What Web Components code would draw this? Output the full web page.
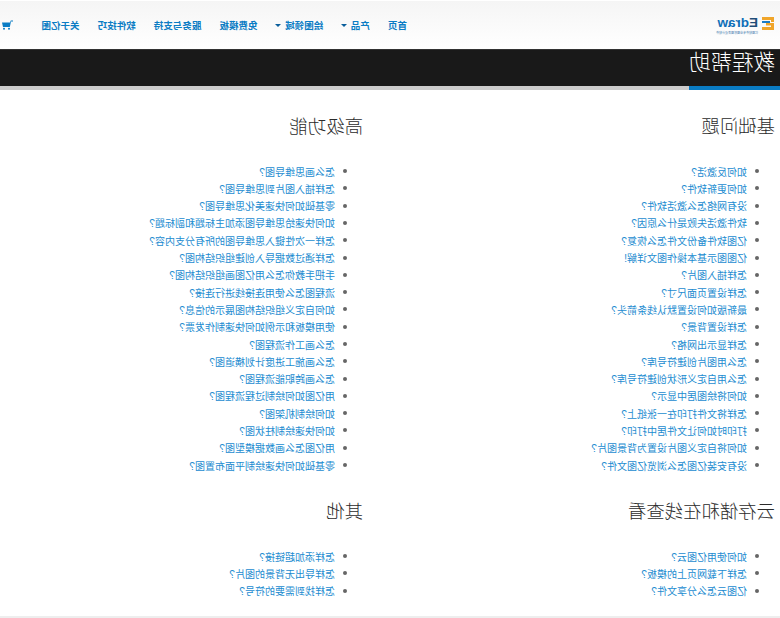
<!DOCTYPE html>
<html lang="zh">
<head>
<meta charset="utf-8">
<title>教程帮助</title>
<style>
  html, body { margin: 0; padding: 0; background: #fff; overflow: hidden; }
</style>
</head>
<body>
<help-page>
  <site-header>
    <nav-link>首页</nav-link>
    <nav-link caret>产品</nav-link>
    <nav-link caret>绘图领域</nav-link>
    <nav-link>免费模板</nav-link>
    <nav-link>服务与支持</nav-link>
    <nav-link>软件技巧</nav-link>
    <nav-link>关于亿图</nav-link>
  </site-header>
  <title-band>教程帮助</title-band>
  <help-grid>
    <help-section heading="基础问题">
      <help-item>如何反激活?</help-item>
      <help-item>如何更新软件?</help-item>
      <help-item>没有网络怎么激活软件?</help-item>
      <help-item>软件激活失败是什么原因?</help-item>
      <help-item>亿图软件备份文件怎么恢复?</help-item>
      <help-item>亿图图示基本操作图文详解!</help-item>
      <help-item>怎样插入图片?</help-item>
      <help-item>怎样设置页面尺寸?</help-item>
      <help-item>最新版如何设置默认线条箭头?</help-item>
      <help-item>怎样设置背景?</help-item>
      <help-item>怎样显示出网格?</help-item>
      <help-item>怎么用图片创建符号库?</help-item>
      <help-item>怎么用自定义形状创建符号库?</help-item>
      <help-item>如何将绘图居中显示?</help-item>
      <help-item>怎样将文件打印在一张纸上?</help-item>
      <help-item>打印时如何让文件居中打印?</help-item>
      <help-item>如何将自定义图片设置为背景图片?</help-item>
      <help-item>没有安装亿图怎么浏览亿图文件?</help-item>
    </help-section>
    <help-section heading="高级功能">
      <help-item>怎么画思维导图?</help-item>
      <help-item>怎样插入图片到思维导图?</help-item>
      <help-item>零基础如何快速美化思维导图?</help-item>
      <help-item>如何快速给思维导图添加主标题和副标题?</help-item>
      <help-item>怎样一次性键入思维导图的所有分支内容?</help-item>
      <help-item>怎样通过数据导入创建组织结构图?</help-item>
      <help-item>手把手教你怎么用亿图画组织结构图?</help-item>
      <help-item>流程图怎么使用连接线进行连接?</help-item>
      <help-item>如何自定义组织结构图展示的信息?</help-item>
      <help-item>使用模板和示例如何快速制作发票?</help-item>
      <help-item>怎么画工作流程图?</help-item>
      <help-item>怎么画施工进度计划横道图?</help-item>
      <help-item>怎么画跨职能流程图?</help-item>
      <help-item>用亿图如何绘制过程流程图?</help-item>
      <help-item>如何绘制机架图?</help-item>
      <help-item>如何快速绘制柱状图?</help-item>
      <help-item>用亿图怎么画数据模型图?</help-item>
      <help-item>零基础如何快速绘制平面布置图?</help-item>
    </help-section>
    <help-section heading="云存储和在线查看">
      <help-item>如何使用亿图云?</help-item>
      <help-item>怎样下载网页上的模板?</help-item>
      <help-item>亿图云怎么分享文件?</help-item>
    </help-section>
    <help-section heading="其他">
      <help-item>怎样添加超链接?</help-item>
      <help-item>怎样导出无背景的图片?</help-item>
      <help-item>怎样找到需要的符号?</help-item>
    </help-section>
  </help-grid>
</help-page>

<script>
const CJK = '"Liberation Sans", "Noto Sans CJK SC", sans-serif';

// the whole page is a mirror image of the normal site
class HelpPage extends HTMLElement {
    constructor() {
        super();
        this.attachShadow({ mode: 'open' });
        this.shadowRoot.innerHTML = `
            <style>
                :host {
                    display: flex;
                    flex-direction: column;
                    width: 780px;
                    height: 618px;
                    overflow: hidden;
                    background: #fff;
                    font-family: ${CJK};
                    transform: scaleX(-1);
                }
                .foot {
                    margin-top: auto;
                    height: 2px;
                    background: #eee;
                }
            </style>
            <slot></slot>
            <div class="foot"></div>
        `;
    }
}

class SiteHeader extends HTMLElement {
    constructor() {
        super();
        this.attachShadow({ mode: 'open' });
        this.shadowRoot.innerHTML = `
            <style>
                :host {
                    display: flex;
                    align-items: center;
                    height: 49px;
                    padding: 0 2px 0 6px;
                    border-top: 1px solid #fff;
                    box-sizing: border-box;
                    background: linear-gradient(#f5f5f5, #fff);
                }
                .logo {
                    display: flex;
                    gap: 4px;
                    width: 54px;
                    margin-right: 313px;
                }
                .logo svg { margin-top: 2px; }
                .name {
                    display: flex;
                    flex-direction: column;
                    width: 38px;
                }
                .word {
                    font: bold 13.500px/15px "Liberation Sans", sans-serif;
                    color: #0f6fb8;
                }
                .word b { color: #1f4e79; }
                .tag {
                    font-size: 3px;
                    line-height: 4px;
                    margin-top: 1px;
                    white-space: nowrap;
                    color: #4a7fb0;
                }
                nav {
                    display: flex;
                    gap: 18.200px;
                    flex: 1;
                }
                svg { display: block; flex: none; }
            </style>
            <div class="logo">
                <svg width="12" height="13" viewBox="0 0 12 13">
                    <path d="M0 0h12v3H3v2H0z" fill="#f0a52a"/>
                    <path d="M0 6h8v2.500H3V10h9v3H0z" fill="#f0a52a"/>
                    <path d="M4 4h8v2H4z" fill="#1c7cc8"/>
                </svg>
                <div class="name">
                    <span class="word"><b>E</b>draw</span>
                    <span class="tag">亿图软件专业图形图表设计软件</span>
                </div>
            </div>
            <nav><slot></slot></nav>
            <svg width="11" height="10" viewBox="0 0 11 10">
                <path d="M0 .5h2.200L3 2.500h8L10 7H3.200L2 1.500H0z" fill="#0a7cc4"/>
                <circle cx="4" cy="8.700" r="1" fill="#0a7cc4"/>
                <circle cx="9" cy="8.700" r="1" fill="#0a7cc4"/>
            </svg>
        `;
    }
}

class NavLink extends HTMLElement {
    constructor() {
        super();
        this.attachShadow({ mode: 'open' });
        this.shadowRoot.innerHTML = `
            <style>
                :host {
                    display: flex;
                    align-items: center;
                    gap: 4px;
                    font-size: 9.500px;
                    font-weight: bold;
                    color: #0a7cc4;
                    white-space: nowrap;
                }
                .caret {
                    display: none;
                    width: 0;
                    height: 0;
                    margin-right: -.600px;
                    border: 3px solid transparent;
                    border-top: 3px solid #0a5f9c;
                    border-bottom: 0;
                }
                :host([caret]) .caret { display: block; }
            </style>
            <slot></slot>
            <span class="caret"></span>
        `;
    }
}

class TitleBand extends HTMLElement {
    constructor() {
        super();
        this.attachShadow({ mode: 'open' });
        this.shadowRoot.innerHTML = `
            <style>
                :host {
                    display: block;
                    height: 37px;
                    background: #191919;
                    border-top: 1px solid #333;
                    box-sizing: border-box;
                    position: relative;
                    padding-left: 5px;
                    font-size: 21.500px;
                    line-height: 26px;
                    font-weight: 300;
                    color: #fff;
                    margin-bottom: 4px;
                }
                .rule {
                    position: absolute;
                    left: 0;
                    right: 0;
                    top: 36px;
                    height: 4px;
                    background: #ccc;
                }
                .rule i {
                    display: block;
                    width: 91px;
                    height: 4px;
                    background: #0a7cc4;
                }
            </style>
            <slot></slot>
            <div class="rule"><i></i></div>
        `;
    }
}

class HelpGrid extends HTMLElement {
    constructor() {
        super();
        this.attachShadow({ mode: 'open' });
        this.shadowRoot.innerHTML = `
            <style>
                :host {
                    display: grid;
                    grid-template-columns: 412px 1fr;
                    row-gap: 28.300px;
                    padding: 27px 0 0 5px;
                }
            </style>
            <slot></slot>
        `;
    }
}

class HelpSection extends HTMLElement {
    constructor() {
        super();
        this.attachShadow({ mode: 'open' });
        this.shadowRoot.innerHTML = `
            <style>
                :host { display: block; }
                h3 {
                    margin: 0 0 25.400px;
                    font-size: 18.400px;
                    line-height: 20px;
                    font-weight: 300;
                    color: #2b2b2b;
                }
                .list { padding-left: 16px; }
            </style>
            <h3></h3>
            <div class="list"><slot></slot></div>
        `;
    }

    connectedCallback() {
        this.shadowRoot.querySelector('h3').textContent = this.getAttribute('heading');
    }
}

class HelpItem extends HTMLElement {
    constructor() {
        super();
        this.attachShadow({ mode: 'open' });
        this.shadowRoot.innerHTML = `
            <style>
                :host {
                    display: flex;
                    align-items: center;
                    gap: 8px;
                    height: 17.300px;
                    font-size: 10px;
                    color: #1b8bd0;
                    white-space: nowrap;
                }
                .dot {
                    width: 4px;
                    height: 4px;
                    border-radius: 50%;
                    background: #666;
                }
            </style>
            <span class="dot"></span>
            <slot></slot>
        `;
    }
}

customElements.define('help-page', HelpPage);
customElements.define('site-header', SiteHeader);
customElements.define('nav-link', NavLink);
customElements.define('title-band', TitleBand);
customElements.define('help-grid', HelpGrid);
customElements.define('help-section', HelpSection);
customElements.define('help-item', HelpItem);
</script>
</body>
</html>
